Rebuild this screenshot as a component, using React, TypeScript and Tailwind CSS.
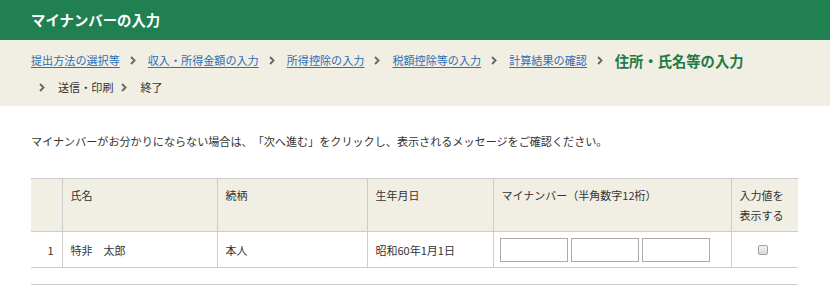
import React from "react";

const steps = [
  { label: "提出方法の選択等", href: true },
  { label: "収入・所得金額の入力", href: true },
  { label: "所得控除の入力", href: true },
  { label: "税額控除等の入力", href: true },
  { label: "計算結果の確認", href: true },
  { label: "住所・氏名等の入力", current: true },
];

const laterSteps = ["送信・印刷", "終了"];

function Chevron() {
  return (
    <svg width="6" height="9" viewBox="0 0 6 9" className="shrink-0">
      <path d="M1 1l3.6 3.5L1 8" fill="none" stroke="#666" strokeWidth="1.8" />
    </svg>
  );
}

export default function App() {
  return (
    <div
      className="w-[830px] h-[307px] bg-white text-[#333] overflow-hidden [text-spacing-trim:space-all]"
      style={{ fontFamily: '"Noto Sans CJK JP", "Noto Sans", sans-serif' }}
    >
      {/* ヘッダー */}
      <header className="h-10 bg-[#20804f] px-[31px] flex items-center">
        <h1 className="text-[14.4px] font-bold text-white leading-none">マイナンバーの入力</h1>
      </header>

      {/* パンくず */}
      <nav className="h-[66px] bg-[#f1eee3] px-[31px] pt-[7px]">
        <ol className="flex items-center h-[27px] text-[11.1px]">
          {steps.map((s, i) => (
            <li key={i} className="flex items-center">
              {i > 0 && (
                <span className="ml-[10px] mr-[12px] flex items-center">
                  <Chevron />
                </span>
              )}
              {s.current ? (
                <span className="text-[14.3px] font-bold text-[#1e7a46]">{s.label}</span>
              ) : (
                <a className="text-[#2b6fb6] underline underline-offset-2">{s.label}</a>
              )}
            </li>
          ))}
        </ol>
        <ol className="flex items-center h-[27px] text-[11.1px]">
          {laterSteps.map((s, i) => (
            <li key={i} className="flex items-center">
              <span className="ml-[8px] mr-[13px] flex items-center">
                <Chevron />
              </span>
              <span className="text-[#333]">{s}</span>
            </li>
          ))}
        </ol>
      </nav>

      {/* 本文 */}
      <main className="px-[31px] pt-[25px]">
        <p className="text-[11.1px] leading-5">
          マイナンバーがお分かりにならない場合は、「次へ進む」をクリックし、表示されるメッセージをご確認ください。
        </p>

        <table className="mt-[27px] w-[767px] border-collapse text-[11px] leading-5 table-fixed">
          <colgroup>
            <col className="w-[31px]" />
            <col className="w-[155px]" />
            <col className="w-[150px]" />
            <col className="w-[126px]" />
            <col className="w-[238px]" />
            <col className="w-[67px]" />
          </colgroup>
          <thead>
            <tr className="bg-[#f1eee4] border-y border-[#ccc] align-top">
              <th className="font-normal"></th>
              <th className="font-normal text-left border-l border-[#ccc] px-2 pt-[6px] pb-[26px]">氏名</th>
              <th className="font-normal text-left border-l border-[#ccc] px-2 pt-[6px]">続柄</th>
              <th className="font-normal text-left border-l border-[#ccc] px-2 pt-[6px]">生年月日</th>
              <th className="font-normal text-left border-l border-[#ccc] px-2 pt-[6px]">マイナンバー（半角数字12桁）</th>
              <th className="font-normal text-left border-l border-[#ccc] px-2 pt-[6px] pb-[6px]">
                入力値を
                <br />
                表示する
              </th>
            </tr>
          </thead>
          <tbody>
            <tr className="border-b border-[#ccc] align-middle">
              <td className="text-right pr-2">1</td>
              <td className="border-l border-[#ccc] px-2">特非　太郎</td>
              <td className="border-l border-[#ccc] px-2">本人</td>
              <td className="border-l border-[#ccc] px-2">昭和60年1月1日</td>
              <td className="border-l border-[#ccc] pl-[6px] pt-[6px] pb-[5px]">
                <div className="flex gap-[3px]">
                  <input className="w-[68px] h-[24px] border border-[#aaa] bg-white" />
                  <input className="w-[68px] h-[24px] border border-[#aaa] bg-white" />
                  <input className="w-[68px] h-[24px] border border-[#aaa] bg-white" />
                </div>
              </td>
              <td className="border-l border-[#ccc]">
                <div className="flex justify-center pr-[4px]">
                  <span className="block w-[10px] h-[10px] rounded-[2px] border border-[#a3a3a3] bg-gradient-to-b from-[#f4f4f4] to-[#d9d9d9]" />
                </div>
              </td>
            </tr>
          </tbody>
        </table>

        <div className="mt-[16px] w-[767px] border-t border-[#ccc]" />
      </main>
    </div>
  );
}
